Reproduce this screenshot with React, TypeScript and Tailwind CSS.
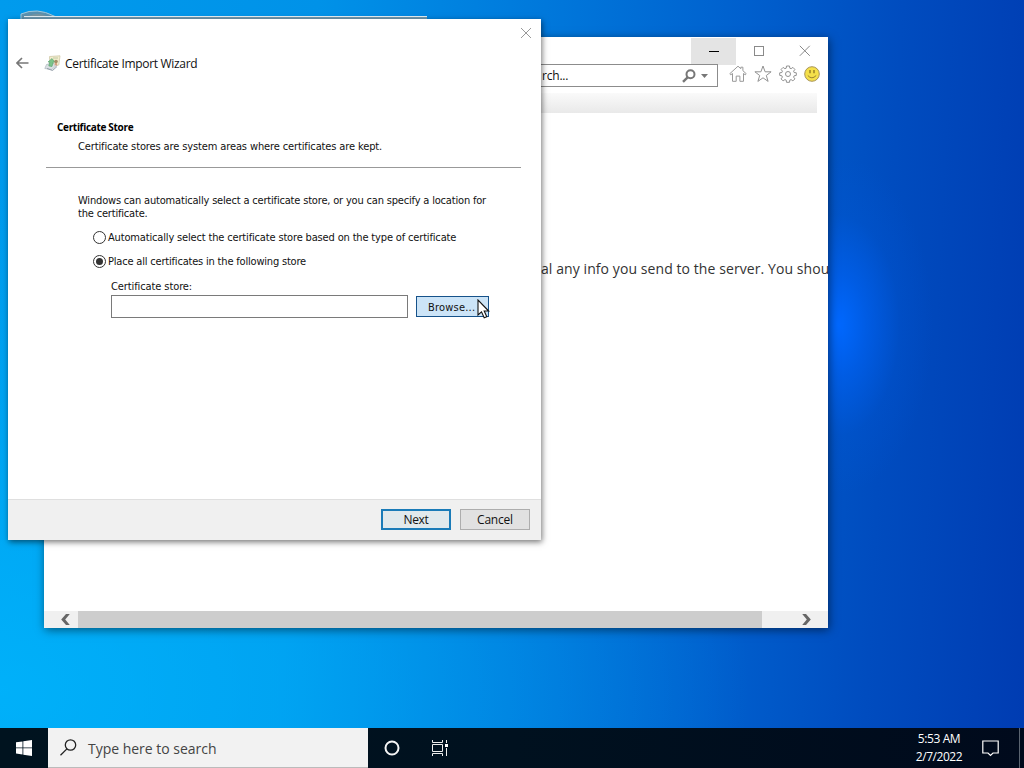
import React from "react";

function CertificateIcon() {
  return (
    <svg width="17" height="17" viewBox="0 0 17 17">
      <path d="M5.5 1.500 16 .8 14.800 10 6 12Z" fill="#f3edce" stroke="#cfc9a8" strokeWidth=".8" />
      <path d="M2.500 9.500 8 8l5 2-5 4.500L.8 13.500Z" fill="#dbe0e4" stroke="#a3adb5" strokeWidth=".6" />
      <path d="M3 13.500 8.500 15.500 13 11.500" stroke="#8a95a0" strokeWidth=".9" fill="none" />
      <path d="M4.800 11 5.800 7 4 7 8 3.500l2.800 3.500H9.300L8 11.500Z" fill="#7cc48a" stroke="#55a06c" strokeWidth=".6" />
      <circle cx="12" cy="6.500" r="1.800" fill="#a58f68" />
      <path d="m11 8-.4 3 1.400-1 1.300 1-.4-3Z" fill="#d8a080" />
      <path d="M9 3h5" stroke="#b4c09a" strokeWidth=".8" />
    </svg>
  );
}

function Radio({ checked }: { checked?: boolean }) {
  return (
    <span className="flex h-[13px] w-[13px] shrink-0 items-center justify-center rounded-full border border-[#333] bg-white">
      {checked && <span className="h-[7px] w-[7px] rounded-full bg-[#333]" />}
    </span>
  );
}

function ExplorerWindow() {
  return (
    <section className="absolute left-[44px] top-[37px] flex h-[591px] w-[784px] flex-col overflow-hidden bg-white">
      <div className="flex h-[27px] shrink-0 justify-end pr-[1px] pt-px">
        <div className="flex h-[27px] w-[45px] items-center justify-center bg-[#e4e4e4]">
          <svg width="11" height="11"><path d="M1 5.500h10" stroke="#000" /></svg>
        </div>
        <div className="flex h-[26px] w-[46px] items-center justify-center">
          <svg width="11" height="11"><rect x=".5" y=".5" width="9" height="9" fill="none" stroke="#8a8a8a" /></svg>
        </div>
        <div className="flex h-[26px] w-[45px] items-center justify-center">
          <svg width="12" height="12"><path d="m.8.8 10 10M10.800.8l-10 10" stroke="#888" fill="none" /></svg>
        </div>
      </div>
      <div className="flex h-[23px] shrink-0 items-stretch">
        <div className="relative flex w-[674px] items-center border border-[#8c8c8c] bg-white pl-[497px]">
          <span className="whitespace-pre font-['Open_Sans','Noto_Sans',sans-serif] text-[12px] tracking-[-0.2px] text-[#111]">rch...</span>
          <svg className="ml-auto" width="14" height="14" viewBox="0 0 14 14" fill="none" stroke="#777">
            <circle cx="8.500" cy="5.300" r="4" strokeWidth="2" />
            <path d="M5.600 8.300 1 12.800" strokeWidth="2.400" />
          </svg>
          <svg className="ml-[5px] mr-[9px]" width="7" height="4"><path d="M0 0h7L3.500 4Z" fill="#777" /></svg>
        </div>
        <div className="flex items-center gap-[7px] pb-[3px] pl-[11px]">
          <svg width="18" height="18" viewBox="0 0 18 18" fill="none" stroke="#999">
            <path d="M3.500 8.500 1.800 9.800.8 8.700 9 1.200l2.800 2.500V2.200h2.100v3.500l3.300 3-1 1.100-1.700-1.300v7.800h-3.600v-5.200H7.200v5.200H3.500Z" />
          </svg>
          <svg width="18" height="18" viewBox="0 0 18 18" fill="none" stroke="#929292">
            <path d="m9 1 2.100 5.800h6L12.300 10.500l1.800 5.900L9 12.800l-5.100 3.600 1.800-5.900L.9 6.800h6Z" />
          </svg>
          <svg width="18" height="18" viewBox="0 0 18 18" fill="none" stroke="#929292">
            <path d="M7.500 1h3l.3 2.200 1.300.5 1.800-1.300 2 2-1.300 1.800.5 1.300 2.200.3v2.600l-2.200.4-.5 1.300 1.300 1.800-2 2-1.800-1.300-1.300.5-.3 2.200h-3l-.3-2.200-1.300-.5-1.800 1.300-2-2 1.300-1.800-.5-1.300L.7 10.400V7.800l2.200-.3.500-1.300-1.300-1.800 2-2 1.800 1.300 1.300-.5Z" />
            <circle cx="9" cy="9" r="2.500" />
          </svg>
          <svg width="16" height="16" viewBox="0 0 16 16">
            <circle cx="8" cy="8" r="7.300" fill="#f5e04a" stroke="#a8955a" />
            <path d="M6 4v3.200M10 4v3.200" stroke="#8c7420" strokeWidth="1.300" />
            <path d="M3.800 9.500q4 4.600 8.400 0" fill="none" stroke="#9a8230" />
          </svg>
        </div>
      </div>
      <div className="mr-[11px] mt-[6px] h-[20px] shrink-0 bg-linear-to-b from-[#fafafa] to-[#e9e9e9]" />
      <div className="flex min-h-0 grow pl-[497px] pt-[146px]">
        <p className="whitespace-pre font-['Open_Sans','Noto_Sans',sans-serif] text-[14px] leading-[20px] tracking-[0.08px] text-[#333]">al any info you send to the server. You shou</p>
      </div>
      <div className="flex h-[17px] shrink-0 items-stretch bg-[#f0f0f0]">
        <div className="flex w-[34px] items-center justify-end pr-[8px]">
          <svg width="9" height="11" viewBox="0 0 9 11"><path d="M5 0h3.800L4.200 5.500 8.800 11H5L.2 5.500Z" fill="#666" /></svg>
        </div>
        <div className="w-[684px] bg-[#cdcdcd]" />
        <div className="flex grow items-center pl-[40px]">
          <svg width="9" height="11" viewBox="0 0 9 11"><path d="M4 0H.2l4.600 5.500L.2 11H4l4.800-5.500Z" fill="#666" /></svg>
        </div>
      </div>
    </section>
  );
}

function WizardDialog() {
  return (
    <section className="absolute left-[8px] top-[19px] flex h-[521px] w-[533px] flex-col bg-white font-['DejaVu_Sans_Condensed','DejaVu_Sans',sans-serif] text-[11px] leading-[13px] text-[#111] shadow-[1px_2px_6px_rgba(0,0,0,0.55)]">
      <div className="flex h-[28px] shrink-0 items-center justify-end pr-[9px]">
        <svg width="12" height="12"><path d="m1 1 10 10M11 1 1 11" stroke="#999" fill="none" /></svg>
      </div>
      <div className="flex h-[34px] shrink-0 items-center pl-[8px]">
        <svg className="mb-[2px]" width="13" height="12" viewBox="0 0 13 12" fill="none" stroke="#777" strokeWidth="1.600"><path d="M12.500 6H1M6 1 1 6l5 5" /></svg>
        <div className="ml-[15px] mb-px"><CertificateIcon /></div>
        <h1 className="ml-[4px] whitespace-pre font-['Open_Sans','Noto_Sans',sans-serif] text-[12px] leading-[16px] tracking-[-0.31px]">Certificate Import Wizard</h1>
      </div>
      <div className="ml-[38px] mr-[20px] mt-[40px] h-[28px] shrink-0 pl-[11px]">
        <h2 className="whitespace-pre font-['Open_Sans','Noto_Sans',sans-serif] text-[10px] font-bold tracking-[-0.32px] text-black">Certificate Store</h2>
        <p className="ml-[21px] mt-[6px] whitespace-pre tracking-[-0.12px]">Certificate stores are system areas where certificates are kept.</p>
      </div>
      <hr className="ml-[38px] mr-[20px] mt-[18px] border-[#999]" />
      <div className="flex grow flex-col pl-[70px] pt-[26px]">
        <p className="whitespace-pre tracking-[-0.18px]">Windows can automatically select a certificate store, or you can specify a location for</p>
        <p className="whitespace-pre tracking-[-0.18px]">the certificate.</p>
        <label className="ml-[15px] mt-[11px] flex items-center gap-[2px]"><Radio /><span className="whitespace-pre tracking-[-0.16px]">Automatically select the certificate store based on the type of certificate</span></label>
        <label className="ml-[15px] mt-[11px] flex items-center gap-[2px]"><Radio checked /><span className="whitespace-pre tracking-[-0.19px]">Place all certificates in the following store</span></label>
        <span className="ml-[33px] mt-[12px] whitespace-pre tracking-[-0.1px]">Certificate store:</span>
        <div className="ml-[33px] mt-[2px] flex items-center gap-[8px]">
          <div className="h-[23px] w-[297px] border border-[#7a7a7a] bg-white" />
          <button className="relative flex h-[21px] w-[73px] items-center border border-[#16528a] bg-[#cce4f7] pl-[11px] pt-px">
            <span className="whitespace-pre tracking-[0.2px]">Browse...</span>
            <svg className="absolute left-[60px] top-[2px]" width="13" height="20" viewBox="0 0 13 20">
              <path d="M1 1v15l3.500-3.200 2.700 6 2.600-1.100-2.600-5.700h4.500Z" fill="#fff" stroke="#111" strokeWidth="1.100" />
            </svg>
          </button>
        </div>
      </div>
      <footer className="flex h-[41px] shrink-0 items-center justify-end gap-[9px] border-t border-[#dfdfdf] bg-[#f0f0f0] pb-[2px] pr-[11px] font-['Open_Sans','Noto_Sans',sans-serif] text-[12px]">
        <button className="h-[21px] w-[70px] border-2 border-[#1a7bb8] bg-[#e1e9ec] leading-[17px] tracking-[-0.3px]">Next</button>
        <button className="h-[21px] w-[70px] border border-[#adadad] bg-[#e1e1e1] leading-[19px] tracking-[-0.2px]">Cancel</button>
      </footer>
    </section>
  );
}

function Taskbar() {
  return (
    <footer className="flex h-[40px] shrink-0 bg-linear-to-r from-[#00131f] via-[#00111f] to-[#000a1c] font-['Open_Sans','Noto_Sans',sans-serif] text-white">
      <div className="flex w-[48px] items-center justify-center">
        <svg width="16" height="16" viewBox="0 0 16 16" fill="#fff"><path d="M0 2.300 6.500 1.400V7.500H0ZM7.300 1.300 16 0v7.500H7.300ZM0 8.300h6.500v6.200L0 13.600ZM7.300 8.300H16V16l-8.700-1.300Z" /></svg>
      </div>
      <div className="flex w-[320px] items-center border-b border-[#bbb] bg-[#f2f2f2] pl-[12px]">
        <svg width="17" height="17" viewBox="0 0 17 17" fill="none" stroke="#222" strokeWidth="1.300"><circle cx="10.500" cy="6" r="5.200" /><path d="M6.900 9.900.5 16.200" /></svg>
        <span className="ml-[11px] whitespace-pre pt-[2px] text-[14px] tracking-[-0.02px] text-[#444]">Type here to search</span>
      </div>
      <div className="flex w-[48px] items-center justify-center">
        <svg width="16" height="16"><circle cx="8" cy="8" r="6.500" fill="none" stroke="#f5f5f5" strokeWidth="2" /></svg>
      </div>
      <div className="flex w-[48px] items-center justify-center">
        <svg width="17" height="16" viewBox="0 0 17 16" fill="none" stroke="#eee"><path d="M.5 0v2.500h10V0M.5 16v-2.500h10V16M.5 4.500h10v7H.5ZM14.500 0v3M14.500 8v8" /><path d="M13 4h3v3h-3Z" fill="#fff" stroke="none" /></svg>
      </div>
      <div className="ml-auto flex w-[60px] flex-col items-center justify-center pb-px text-[12px] leading-[18px]">
        <span className="whitespace-pre tracking-[-0.4px]">5:53 AM</span>
        <span className="whitespace-pre tracking-[-0.45px]">2/7/2022</span>
      </div>
      <div className="flex w-[50px] items-center justify-center pr-[7px]">
        <svg width="17" height="17" viewBox="0 0 17 17" fill="none" stroke="#fff" strokeWidth="1.200"><path d="M.8 1h15.400v12H11l-2.500 2.500L6 13H.8Z" /></svg>
      </div>
      <div className="mr-[4px] w-px bg-[#5a6470]" />
    </footer>
  );
}

export default function App() {
  return (
    <div className="flex h-[768px] w-[1024px] flex-col overflow-hidden bg-[#0060cc]">
      <main className="relative grow bg-[radial-gradient(ellipse_95px_170px_at_838px_325px,#0068ff_0%,rgba(0,100,250,0.6)_30%,rgba(0,90,225,0.2)_65%,rgba(0,90,220,0)_100%),radial-gradient(ellipse_750px_500px_at_0px_690px,rgba(0,186,255,0.7)_0%,rgba(0,180,255,0)_100%),linear-gradient(93deg,#009bed_0%,#0092e8_30%,#0076da_53%,#0060ce_70%,#004cbf_85%,#003cb2_100%)]">
        <svg className="absolute left-[20px] top-[9px]" width="60" height="14"><path d="M1 12V5Q17-2 34 7l6 3v4H1Z" fill="#5b91af" stroke="#a3c9dc" /><path d="M4 10Q17 0 32 10" fill="#7895a2" /></svg>
        <div className="absolute left-[24px] top-[16px] h-[4px] w-[403px] border-t border-[#e7f0f5] bg-[#6f9ab2]" />
        <div className="absolute left-[44px] top-[37px] h-[591px] w-[784px] shadow-[1px_2px_9px_rgba(0,0,0,0.5)]" />
        <ExplorerWindow />
        <WizardDialog />
      </main>
      <Taskbar />
    </div>
  );
}
